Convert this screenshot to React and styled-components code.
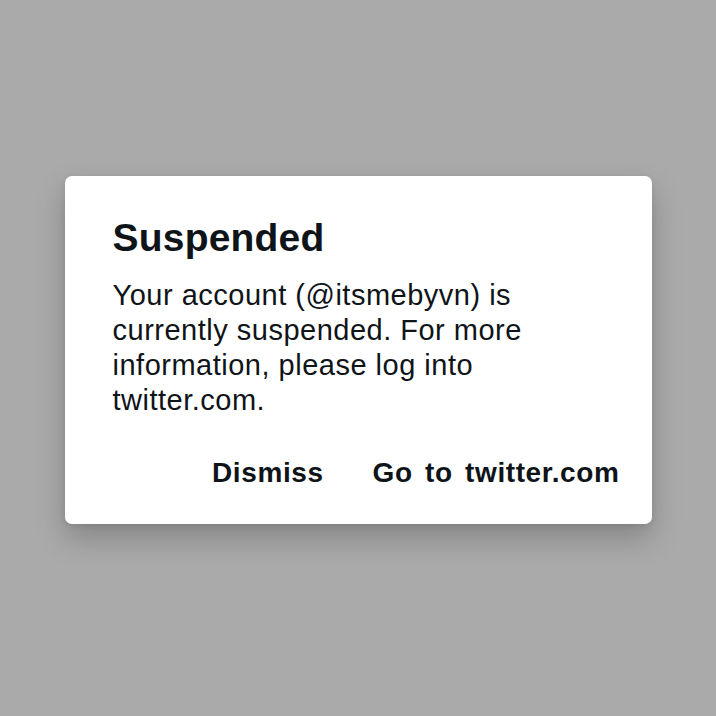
import React from 'react';
import styled, { createGlobalStyle } from 'styled-components';

const GlobalStyle = createGlobalStyle`
  body {
    margin: 0;
    background: #aaaaaa;
    font-family: "Liberation Sans", Arial, sans-serif;
  }
`;

const Page = styled.div`
  min-height: 100vh;
  display: flex;
  justify-content: center;
  align-items: flex-start;
  padding-top: 176px;
  box-sizing: border-box;
`;

const Card = styled.div`
  width: 587px;
  height: 348px;
  box-sizing: border-box;
  background: #ffffff;
  border-radius: 7px;
  box-shadow: 0 14px 30px rgba(0, 0, 0, 0.22), 0 2px 6px rgba(0, 0, 0, 0.08);
  padding: 38px 32px 0 48px;
  display: flex;
  flex-direction: column;
  color: #0f1419;
`;

const Title = styled.h2`
  margin: 0;
  font-size: 39px;
  line-height: 47px;
  font-weight: 700;
  letter-spacing: 0.2px;
`;

const Message = styled.p`
  margin: 17px 16px 0 0;
  font-size: 29px;
  line-height: 35px;
  font-weight: 400;
  letter-spacing: 0.5px;
`;

const Actions = styled.div`
  margin-top: 38px;
  display: flex;
  justify-content: flex-end;
  gap: 49px;
`;

const ActionButton = styled.button`
  border: none;
  background: none;
  padding: 0;
  font-family: inherit;
  font-size: 28px;
  line-height: 34px;
  font-weight: 700;
  letter-spacing: 0.6px;
  word-spacing: 4px;
  color: #0f1419;
  cursor: pointer;
`;

export default function App() {
  return (
    <>
      <GlobalStyle />
      <Page>
        <Card>
          <Title>Suspended</Title>
          <Message>
            Your account (@itsmebyvn) is currently suspended. For more information, please log into twitter.com.
          </Message>
          <Actions>
            <ActionButton>Dismiss</ActionButton>
            <ActionButton>Go to twitter.com</ActionButton>
          </Actions>
        </Card>
      </Page>
    </>
  );
}
